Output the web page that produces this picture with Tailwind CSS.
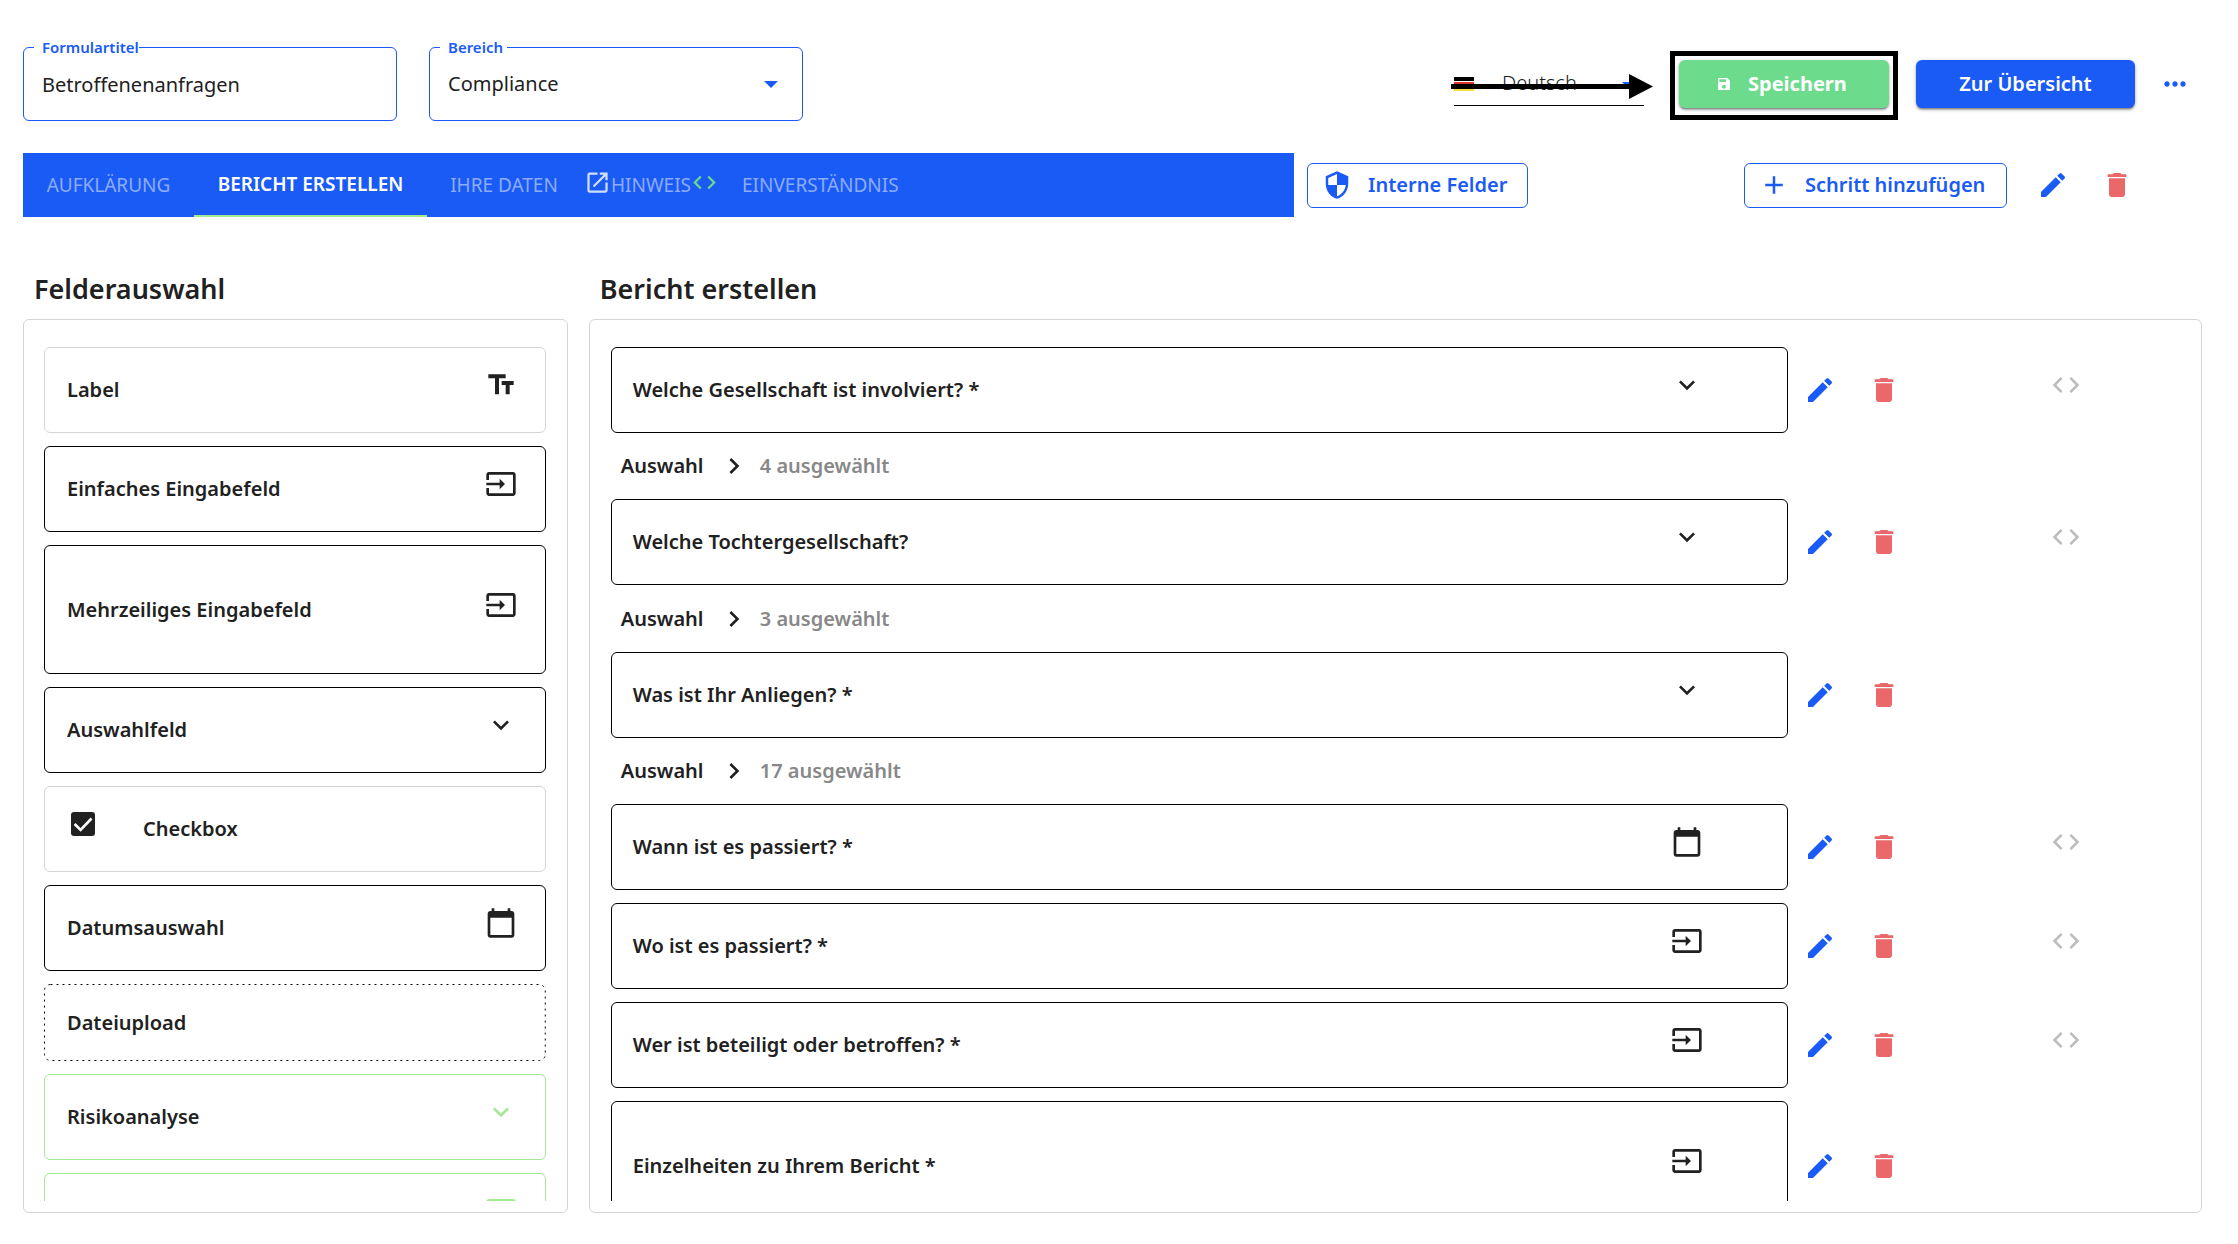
<!DOCTYPE html>
<html lang="de">
<head>
<meta charset="utf-8">
<title>Betroffenenanfragen</title>
<script src="https://cdn.jsdelivr.net/npm/@tailwindcss/browser@4"></script>
</head>
<body class="flex h-screen flex-col overflow-hidden bg-white pt-[47px] pr-9 pb-[31px] pl-[23px] font-['Noto_Sans',sans-serif] text-xl text-[#212121]">

<svg class="hidden">
  <symbol id="edit" viewBox="0 0 24 24"><path d="M3 17.25V21h3.75L17.81 9.94l-3.75-3.75L3 17.25zM20.71 7.04c.39-.39.39-1.02 0-1.41l-2.34-2.34a.9959.9959 0 00-1.41 0l-1.83 1.83 3.75 3.75 1.83-1.83z"/></symbol>
  <symbol id="delete" viewBox="0 0 24 24"><path d="M6 19c0 1.1.9 2 2 2h8c1.1 0 2-.9 2-2V7H6v12zM19 4h-3.5l-1-1h-5l-1 1H5v2h14V4z"/></symbol>
  <symbol id="code" viewBox="0 0 24 24"><path d="M9.4 16.6L4.8 12l4.6-4.6L8 6l-6 6 6 6 1.4-1.4zm5.2 0l4.6-4.6-4.6-4.6L16 6l6 6-6 6-1.4-1.4z"/></symbol>
  <symbol id="down" viewBox="0 0 24 24"><path d="M7.41 8.59L12 13.17l4.59-4.58L18 10l-6 6-6-6z"/></symbol>
  <symbol id="right" viewBox="0 0 24 24"><path d="M8.59 16.59L13.17 12 8.59 7.41 10 6l6 6-6 6z"/></symbol>
  <symbol id="input" viewBox="0 0 24 24"><path d="M21 3.01H3c-1.1 0-2 .9-2 2V9h2V4.99h18v14.03H3V15H1v4.01c0 1.1.9 1.98 2 1.98h18c1.1 0 2-.88 2-1.98v-14c0-1.11-.9-2-2-2zM11 16l4-4-4-4v3H1v2h10v3z"/></symbol>
  <symbol id="calendar" viewBox="0 0 24 24"><path d="M20 3h-1V1h-2v2H7V1H5v2H4c-1.1 0-2 .9-2 2v16c0 1.1.9 2 2 2h16c1.1 0 2-.9 2-2V5c0-1.1-.9-2-2-2zm0 18H4V8h16v13z"/></symbol>
  <symbol id="textfields" viewBox="0 0 24 24"><path d="M2.5 4v3h5v12h3V7h5V4h-13zm19 5h-9v3h3v7h3v-7h3V9z"/></symbol>
  <symbol id="open" viewBox="0 0 24 24"><path d="M19 19H5V5h7V3H5c-1.11 0-2 .9-2 2v14c0 1.1.89 2 2 2h14c1.1 0 2-.9 2-2v-7h-2v7zM14 3v2h3.59l-9.83 9.83 1.41 1.41L19 6.41V10h2V3h-7z"/></symbol>
  <symbol id="shield" viewBox="0 0 24 24"><path d="M12 1L3 5v6c0 5.55 3.84 10.74 9 12 5.16-1.26 9-6.45 9-12V5l-9-4zm0 10.99h7c-.53 4.12-3.28 7.79-7 8.94V12H5V6.3l7-3.11v8.8z"/></symbol>
  <symbol id="add" viewBox="0 0 24 24"><path d="M19 13h-6v6h-2v-6H5v-2h6V5h2v6h6v2z"/></symbol>
  <symbol id="save" viewBox="0 0 24 24"><path d="M17 3H5c-1.11 0-2 .9-2 2v14c0 1.1.89 2 2 2h14c1.1 0 2-.9 2-2V7l-4-4zm-5 16c-1.66 0-3-1.34-3-3s1.34-3 3-3 3 1.34 3 3-1.34 3-3 3zm3-10H5V5h10v4z"/></symbol>
  <symbol id="more" viewBox="0 0 24 24"><path d="M6 10c-1.1 0-2 .9-2 2s.9 2 2 2 2-.9 2-2-.9-2-2-2zm12 0c-1.100 0-2 .9-2 2s.9 2 2 2 2-.9 2-2-.9-2-2-2zm-6 0c-1.100 0-2 .9-2 2s.9 2 2 2 2-.9 2-2-.9-2-2-2z"/></symbol>
</svg>

<header class="flex h-[74px] shrink-0 items-center">
  <div class="relative h-full w-[374px] rounded-md border border-[#1a5af5]">
    <label for="title" class="absolute -top-[11px] left-[10px] bg-white pl-2 text-[15px] leading-5 font-semibold text-[#1a5af5]">Formulartitel</label>
    <input id="title" type="text" value="Betroffenenanfragen" class="h-full w-full bg-transparent px-[18px] outline-none">
  </div>
  <div class="relative ml-8 h-full w-[374px] rounded-md border border-[#1a5af5]">
    <label for="area" class="absolute -top-[11px] left-[10px] bg-white pr-1 pl-2 text-[15px] leading-5 font-semibold text-[#1a5af5]">Bereich</label>
    <select id="area" class="h-full w-full appearance-none bg-transparent px-[18px] outline-none"><option>Compliance</option></select>
    <svg class="pointer-events-none absolute top-[33px] right-6 h-[7px] w-[14px] fill-[#1a5af5]" viewBox="0 0 14 7"><path d="M0 0h14L7 7z"/></svg>
  </div>

  <div class="relative ml-auto h-[43px] w-[190px] border-b border-black">
    <svg class="pointer-events-none absolute top-[14px] left-0 h-[14px] w-5" viewBox="0 0 20 14"><path d="M0 0h20v4H0z" fill="#000"/><path d="M0 5h20v5H0z" fill="#d8322a"/><path d="M0 10h20v4H0z" fill="#f3dd45"/></svg>
    <select aria-label="Sprache" class="h-10 w-full appearance-none bg-transparent pl-12 font-light outline-none"><option>Deutsch</option></select>
    <svg class="pointer-events-none absolute top-[19px] right-2 h-[7px] w-[14px] fill-[#1a5af5]" viewBox="0 0 14 7"><path d="M0 0h14L7 7z"/></svg>
    <svg class="pointer-events-none absolute top-[11px] -left-[3px] h-[25px] w-[202px]" viewBox="0 0 202 25"><path d="M0 10h178V0l24 12.500L178 25V15H0z"/></svg>
  </div>

  <div class="relative ml-[35px]">
    <button class="flex h-12 w-[210px] items-center gap-4 rounded-md bg-[#6cdb8c] pl-[37px] font-bold text-white shadow-[0_3px_1px_-2px_rgba(0,0,0,0.2),0_2px_2px_rgba(0,0,0,0.24),0_1px_5px_rgba(0,0,0,0.2)]">
      <svg class="size-4 fill-current"><use href="#save"/></svg>Speichern
    </button>
    <div class="pointer-events-none absolute -top-[9px] -right-[9px] -bottom-3 -left-[9px] border-5 border-black"></div>
  </div>
  <button class="ml-[27px] h-12 w-[219px] rounded-md bg-[#1a5af5] font-semibold text-white shadow-[0_3px_1px_-2px_rgba(0,0,0,0.2),0_2px_2px_rgba(0,0,0,0.24),0_1px_5px_rgba(0,0,0,0.2)]">Zur Übersicht</button>
  <button aria-label="Mehr" class="mr-[11px] ml-6"><svg class="size-8 fill-[#1a5af5]"><use href="#more"/></svg></button>
</header>

<div class="mt-8 flex h-16 shrink-0 items-center">
  <nav class="flex h-16 w-7/12 bg-[#1a5af5] text-[19px] text-white/50">
    <a href="#" class="flex min-w-[171px] items-center justify-center">AUFKLÄRUNG</a>
    <a href="#" class="flex min-w-[233px] items-center justify-center border-b-2 border-[#a3e893] font-semibold text-white">BERICHT ERSTELLEN</a>
    <a href="#" class="flex min-w-[154px] items-center justify-center">IHRE DATEN</a>
    <a href="#" class="flex min-w-[140px] items-center justify-center">
      <svg class="mb-1.5 size-[27px] fill-white/80"><use href="#open"/></svg>HINWEIS<svg class="mb-1.5 size-[27px] fill-[#6cdb8c]"><use href="#code"/></svg>
    </a>
    <a href="#" class="flex items-center px-[21px]">EINVERSTÄNDNIS</a>
  </nav>
  <button class="ml-[13px] flex h-[45px] w-[221px] items-center gap-4 rounded-md border border-[#1a5af5] pl-[14px] font-semibold text-[#1a5af5]">
    <svg class="size-[30px] fill-current"><use href="#shield"/></svg>Interne Felder
  </button>
  <button class="ml-auto flex h-[45px] w-[263px] items-center gap-4 rounded-md border border-[#1a5af5] pl-[14px] font-semibold text-[#1a5af5]">
    <svg class="size-[30px] fill-current"><use href="#add"/></svg>Schritt hinzufügen
  </button>
  <button aria-label="Bearbeiten" class="ml-[30px]"><svg class="size-8 fill-[#1a5af5]"><use href="#edit"/></svg></button>
  <button aria-label="Löschen" class="mr-[69px] ml-8"><svg class="size-8 fill-[#ea686a]"><use href="#delete"/></svg></button>
</div>

<main class="mt-[54px] flex min-h-0 flex-1 gap-[21px]">
  <section class="flex w-1/4 shrink-0 flex-col">
    <h2 class="pb-3 pl-[11px] text-[27px] leading-9 font-semibold">Felderauswahl</h2>
    <div class="min-h-0 flex-1 rounded-md border border-[#d4d4d4] pt-[27px] pr-[21px] pb-[11px] pl-5">
      <ul class="flex h-full flex-col gap-[13px] overflow-hidden font-[650]">
        <li class="flex h-[86px] shrink-0 items-center justify-between rounded-md border border-[#d4d4d4] pr-7 pl-[22px]">Label<svg class="mb-[10px] size-8 fill-current"><use href="#textfields"/></svg></li>
        <li class="flex h-[86px] shrink-0 items-center justify-between rounded-md border border-black pr-7 pl-[22px]">Einfaches Eingabefeld<svg class="mb-[10px] size-8 fill-current"><use href="#input"/></svg></li>
        <li class="flex h-[129px] shrink-0 items-center justify-between rounded-md border border-black pr-7 pl-[22px]">Mehrzeiliges Eingabefeld<svg class="mb-[10px] size-8 fill-current"><use href="#input"/></svg></li>
        <li class="flex h-[86px] shrink-0 items-center justify-between rounded-md border border-black pr-7 pl-[22px]">Auswahlfeld<svg class="mb-[10px] size-8 fill-current"><use href="#down"/></svg></li>
        <li class="flex h-[86px] shrink-0 items-center rounded-md border border-[#d4d4d4] pr-7 pl-[22px]">
          <span class="relative mx-1 mb-[10px] size-6">
            <input id="check" type="checkbox" checked class="block size-6 appearance-none rounded-[3px] bg-[#212121]">
            <svg class="pointer-events-none absolute inset-0 size-6 fill-none stroke-white stroke-[2.6]" viewBox="0 0 24 24"><path d="M3.600 12l6 6L20.500 6.500"/></svg>
          </span>
          <label for="check" class="ml-11">Checkbox</label>
        </li>
        <li class="flex h-[86px] shrink-0 items-center justify-between rounded-md border border-black pr-7 pl-[22px]">Datumsauswahl<svg class="mb-[10px] size-8 fill-current"><use href="#calendar"/></svg></li>
        <li class="relative flex h-[77px] shrink-0 items-center pr-7 pl-[23px]">
          <svg class="absolute inset-0 size-full"><rect x="0.5" y="0.5" rx="6" class="h-[calc(100%-1px)] w-[calc(100%-1px)] fill-none stroke-black" stroke-dasharray="2 4"/></svg>Dateiupload
        </li>
        <li class="flex h-[86px] shrink-0 items-center justify-between rounded-md border border-[#a3e893] pr-7 pl-[22px]">Risikoanalyse<svg class="mb-[10px] size-8 fill-[#a3e893]"><use href="#down"/></svg></li>
        <li class="flex h-[86px] shrink-0 items-center justify-end rounded-md border border-[#a3e893] pr-7 pl-[22px]"><svg class="mb-[10px] size-8 fill-[#a3e893]"><use href="#input"/></svg></li>
      </ul>
    </div>
  </section>

  <section class="flex min-w-0 flex-1 flex-col">
    <h2 class="pb-3 pl-[11px] text-[27px] leading-9 font-semibold">Bericht erstellen</h2>
    <div class="min-h-0 flex-1 rounded-md border border-[#d4d4d4] pt-[27px] pr-5 pb-[11px] pl-[21px]">
      <ul class="flex h-full flex-col overflow-hidden font-[650]">
        <li class="shrink-0">
          <div class="flex items-center">
            <div class="flex h-[86px] w-3/4 items-center justify-between rounded-md border border-black pr-[84px] pl-[21px]">Welche Gesellschaft ist involviert? *<svg class="mb-[10px] size-8 fill-current"><use href="#down"/></svg></div>
            <button aria-label="Bearbeiten" class="ml-4"><svg class="size-8 fill-[#1a5af5]"><use href="#edit"/></svg></button>
            <button aria-label="Löschen" class="ml-8"><svg class="size-8 fill-[#ea686a]"><use href="#delete"/></svg></button>
            <button aria-label="Bedingung" class="mb-[10px] ml-[150px]"><svg class="size-8 fill-[#bdbdbd]"><use href="#code"/></svg></button>
          </div>
          <div class="flex h-[66px] items-center gap-[10px] pl-[10px]"><span class="w-[87px]">Auswahl</span><svg class="size-8 fill-current"><use href="#right"/></svg><span class="text-[#888]">4 ausgewählt</span></div>
        </li>
        <li class="shrink-0">
          <div class="flex items-center">
            <div class="flex h-[86px] w-3/4 items-center justify-between rounded-md border border-black pr-[84px] pl-[21px]">Welche Tochtergesellschaft?<svg class="mb-[10px] size-8 fill-current"><use href="#down"/></svg></div>
            <button aria-label="Bearbeiten" class="ml-4"><svg class="size-8 fill-[#1a5af5]"><use href="#edit"/></svg></button>
            <button aria-label="Löschen" class="ml-8"><svg class="size-8 fill-[#ea686a]"><use href="#delete"/></svg></button>
            <button aria-label="Bedingung" class="mb-[10px] ml-[150px]"><svg class="size-8 fill-[#bdbdbd]"><use href="#code"/></svg></button>
          </div>
          <div class="flex h-[67px] items-center gap-[10px] pl-[10px]"><span class="w-[87px]">Auswahl</span><svg class="size-8 fill-current"><use href="#right"/></svg><span class="text-[#888]">3 ausgewählt</span></div>
        </li>
        <li class="shrink-0">
          <div class="flex items-center">
            <div class="flex h-[86px] w-3/4 items-center justify-between rounded-md border border-black pr-[84px] pl-[21px]">Was ist Ihr Anliegen? *<svg class="mb-[10px] size-8 fill-current"><use href="#down"/></svg></div>
            <button aria-label="Bearbeiten" class="ml-4"><svg class="size-8 fill-[#1a5af5]"><use href="#edit"/></svg></button>
            <button aria-label="Löschen" class="ml-8"><svg class="size-8 fill-[#ea686a]"><use href="#delete"/></svg></button>
          </div>
          <div class="flex h-[66px] items-center gap-[10px] pl-[10px]"><span class="w-[87px]">Auswahl</span><svg class="size-8 fill-current"><use href="#right"/></svg><span class="text-[#888]">17 ausgewählt</span></div>
        </li>
        <li class="flex shrink-0 items-center pb-[13px]">
          <div class="flex h-[86px] w-3/4 items-center justify-between rounded-md border border-black pr-[84px] pl-[21px]">Wann ist es passiert? *<svg class="mb-[10px] size-8 fill-current"><use href="#calendar"/></svg></div>
          <button aria-label="Bearbeiten" class="ml-4"><svg class="size-8 fill-[#1a5af5]"><use href="#edit"/></svg></button>
          <button aria-label="Löschen" class="ml-8"><svg class="size-8 fill-[#ea686a]"><use href="#delete"/></svg></button>
          <button aria-label="Bedingung" class="mb-[10px] ml-[150px]"><svg class="size-8 fill-[#bdbdbd]"><use href="#code"/></svg></button>
        </li>
        <li class="flex shrink-0 items-center pb-[13px]">
          <div class="flex h-[86px] w-3/4 items-center justify-between rounded-md border border-black pr-[84px] pl-[21px]">Wo ist es passiert? *<svg class="mb-[10px] size-8 fill-current"><use href="#input"/></svg></div>
          <button aria-label="Bearbeiten" class="ml-4"><svg class="size-8 fill-[#1a5af5]"><use href="#edit"/></svg></button>
          <button aria-label="Löschen" class="ml-8"><svg class="size-8 fill-[#ea686a]"><use href="#delete"/></svg></button>
          <button aria-label="Bedingung" class="mb-[10px] ml-[150px]"><svg class="size-8 fill-[#bdbdbd]"><use href="#code"/></svg></button>
        </li>
        <li class="flex shrink-0 items-center pb-[13px]">
          <div class="flex h-[86px] w-3/4 items-center justify-between rounded-md border border-black pr-[84px] pl-[21px]">Wer ist beteiligt oder betroffen? *<svg class="mb-[10px] size-8 fill-current"><use href="#input"/></svg></div>
          <button aria-label="Bearbeiten" class="ml-4"><svg class="size-8 fill-[#1a5af5]"><use href="#edit"/></svg></button>
          <button aria-label="Löschen" class="ml-8"><svg class="size-8 fill-[#ea686a]"><use href="#delete"/></svg></button>
          <button aria-label="Bedingung" class="mb-[10px] ml-[150px]"><svg class="size-8 fill-[#bdbdbd]"><use href="#code"/></svg></button>
        </li>
        <li class="flex shrink-0 items-center pb-[13px]">
          <div class="flex h-[129px] w-3/4 items-center justify-between rounded-md border border-black pr-[84px] pl-[21px]">Einzelheiten zu Ihrem Bericht *<svg class="mb-[10px] size-8 fill-current"><use href="#input"/></svg></div>
          <button aria-label="Bearbeiten" class="ml-4"><svg class="size-8 fill-[#1a5af5]"><use href="#edit"/></svg></button>
          <button aria-label="Löschen" class="ml-8"><svg class="size-8 fill-[#ea686a]"><use href="#delete"/></svg></button>
        </li>
      </ul>
    </div>
  </section>
</main>
</body>
</html>
